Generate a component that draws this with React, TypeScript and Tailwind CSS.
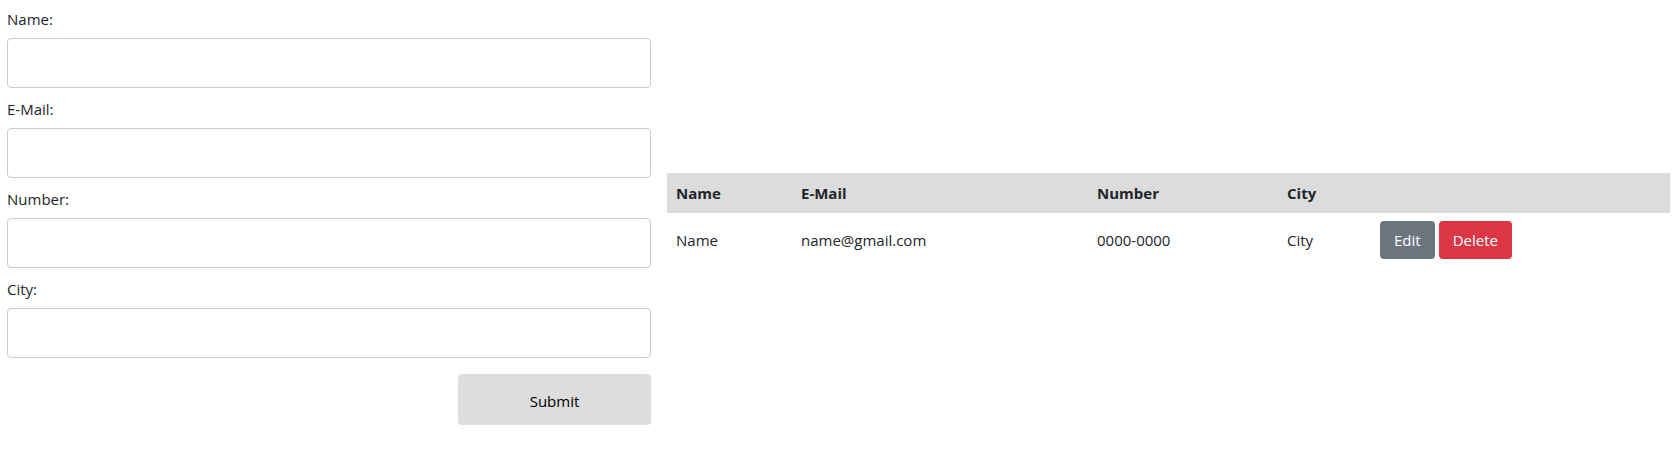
import React from "react";

const font = { fontFamily: '"Open Sans", "Noto Sans", Arial, sans-serif' };

function Field({ label }: { label: string }) {
  return (
    <div className="flex flex-col">
      <label className="block text-[15px] leading-[24px] text-[#212529]">{label}</label>
      <input
        type="text"
        className="mt-[7px] h-[50px] w-full rounded-[4px] border border-[#cccccc] bg-white px-3 text-[15px] outline-none"
      />
    </div>
  );
}

export default function App() {
  return (
    <div className="flex items-center gap-[16px] bg-white pl-[7px] pr-[8px]" style={font}>
      <form className="flex w-[644px] shrink-0 flex-col gap-[9px] pt-[7px] pb-[15px]" onSubmit={(e) => e.preventDefault()}>
        <Field label="Name:" />
        <Field label="E-Mail:" />
        <Field label="Number:" />
        <Field label="City:" />
        <div className="mt-[7px] flex justify-end">
          <button
            type="submit"
            className="h-[51px] w-[193px] rounded-[4px] bg-[#dddddd] pt-[3px] text-[15px] text-black"
          >
            Submit
          </button>
        </div>
      </form>
      <div className="flex-1">
        <table className="w-full border-collapse text-[15px] leading-[24px] text-[#212529]">
          <thead>
            <tr className="bg-[#dcdcdc]">
              <th className="w-[125px] p-[8px] pl-[9px] text-left align-middle font-bold">Name</th>
              <th className="w-[296px] p-[8px] pl-[9px] text-left align-middle font-bold">E-Mail</th>
              <th className="w-[190px] p-[8px] pl-[9px] text-left align-middle font-bold">Number</th>
              <th className="w-[93px] p-[8px] pl-[9px] text-left align-middle font-bold">City</th>
              <th className="p-[8px] pl-[9px] text-left align-middle font-bold"></th>
            </tr>
          </thead>
          <tbody>
            <tr>
              <td className="p-[8px] pl-[9px] align-middle">Name</td>
              <td className="p-[8px] pl-[9px] align-middle">name@gmail.com</td>
              <td className="p-[8px] pl-[9px] align-middle">0000-0000</td>
              <td className="p-[8px] pl-[9px] align-middle">City</td>
              <td className="p-[8px] pl-[9px] align-middle">
                <div className="flex gap-[4px]">
                  <button className="h-[38px] rounded-[4px] bg-[#6c757d] px-[14px] text-[15px] text-white">Edit</button>
                  <button className="h-[38px] rounded-[4px] bg-[#dc3545] px-[14px] text-[15px] text-white">Delete</button>
                </div>
              </td>
            </tr>
          </tbody>
        </table>
      </div>
    </div>
  );
}
